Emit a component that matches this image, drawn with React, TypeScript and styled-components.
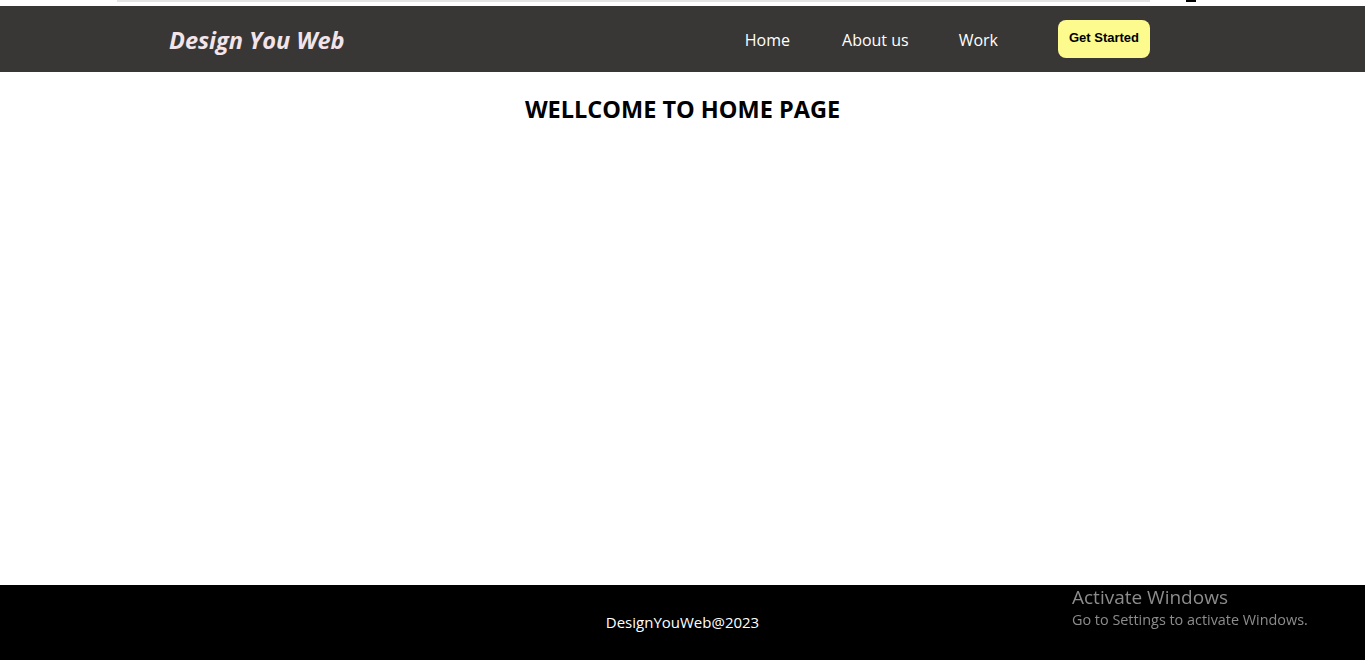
import React from "react";
import styled, { createGlobalStyle } from "styled-components";

const Global = createGlobalStyle`
  html, body { margin: 0; padding: 0; background: #ffffff; }
  body { font-family: "Open Sans", "Noto Sans", sans-serif; }
  * { box-sizing: border-box; }
`;

const Page = styled.div`
  min-height: 100vh;
  display: flex;
  flex-direction: column;
`;

const TopStrip = styled.div`
  height: 6px;
  display: flex;
  align-items: flex-start;
  padding-left: 117px;
`;

const ScrollLine = styled.div`
  width: 1033px;
  height: 2px;
  background: #e4e4e4;
`;

const ScrollMark = styled.div`
  width: 10px;
  height: 2px;
  background: #000;
  margin-left: 36px;
`;

const NavBar = styled.nav`
  height: 66px;
  background: #383735;
  display: flex;
  align-items: center;
  padding: 1px 215px 0 169px;
`;

const Logo = styled.div`
  font-family: "Open Sans", sans-serif;
  font-style: italic;
  font-weight: 700;
  font-size: 23.5px;
  color: #f3e4ea;
  letter-spacing: 0px;
  flex: 1;
`;

const Links = styled.ul`
  list-style: none;
  margin: 0;
  padding: 0;
  display: flex;
  align-items: center;
  gap: 49px;
`;

const LinkItem = styled.li<{ $extra?: number }>`
  font-size: 16px;
  color: #ffffff;
  margin-right: ${(p) => (p.$extra ? `${p.$extra}px` : "0")};
`;

const CTA = styled.button`
  margin-left: 11px;
  margin-top: -1px;
  width: 92px;
  height: 38px;
  border: none;
  border-radius: 8px;
  background: #fdfb8e;
  color: #000;
  font-family: "Liberation Sans", Arial, sans-serif;
  font-weight: 700;
  font-size: 13px;
  padding: 0 0 3px;
  cursor: pointer;
`;

const Main = styled.main`
  flex: 1;
  display: flex;
  flex-direction: column;
  align-items: center;
`;

const Title = styled.h1`
  margin: 21px 0 0;
  font-size: 23.5px;
  font-weight: 700;
  color: #000;
`;

const Footer = styled.footer`
  height: 75px;
  background: #000;
  display: flex;
  align-items: center;
  justify-content: center;
  padding-bottom: 2px;
`;

const FooterText = styled.span`
  color: #fff;
  font-size: 15px;
`;

const Watermark = styled.div`
  position: fixed;
  left: 1072px;
  top: 585px;
  color: #8c8c8c;
  font-family: "Open Sans", sans-serif;
  pointer-events: none;
`;

const WmTitle = styled.div`
  font-size: 19px;
  line-height: 24px;
`;

const WmSub = styled.div`
  font-size: 14.4px;
  line-height: 21px;
`;

export default function App() {
  return (
    <Page>
      <Global />
      <TopStrip>
        <ScrollLine />
        <ScrollMark />
      </TopStrip>
      <NavBar>
        <Logo>Design You Web</Logo>
        <Links>
          <LinkItem $extra={3}>Home</LinkItem>
          <LinkItem $extra={1}>About us</LinkItem>
          <LinkItem>Work</LinkItem>
          <li>
            <CTA>Get Started</CTA>
          </li>
        </Links>
      </NavBar>
      <Main>
        <Title>WELLCOME TO HOME PAGE</Title>
      </Main>
      <Footer>
        <FooterText>DesignYouWeb@2023</FooterText>
      </Footer>
      <Watermark>
        <WmTitle>Activate Windows</WmTitle>
        <WmSub>Go to Settings to activate Windows.</WmSub>
      </Watermark>
    </Page>
  );
}
